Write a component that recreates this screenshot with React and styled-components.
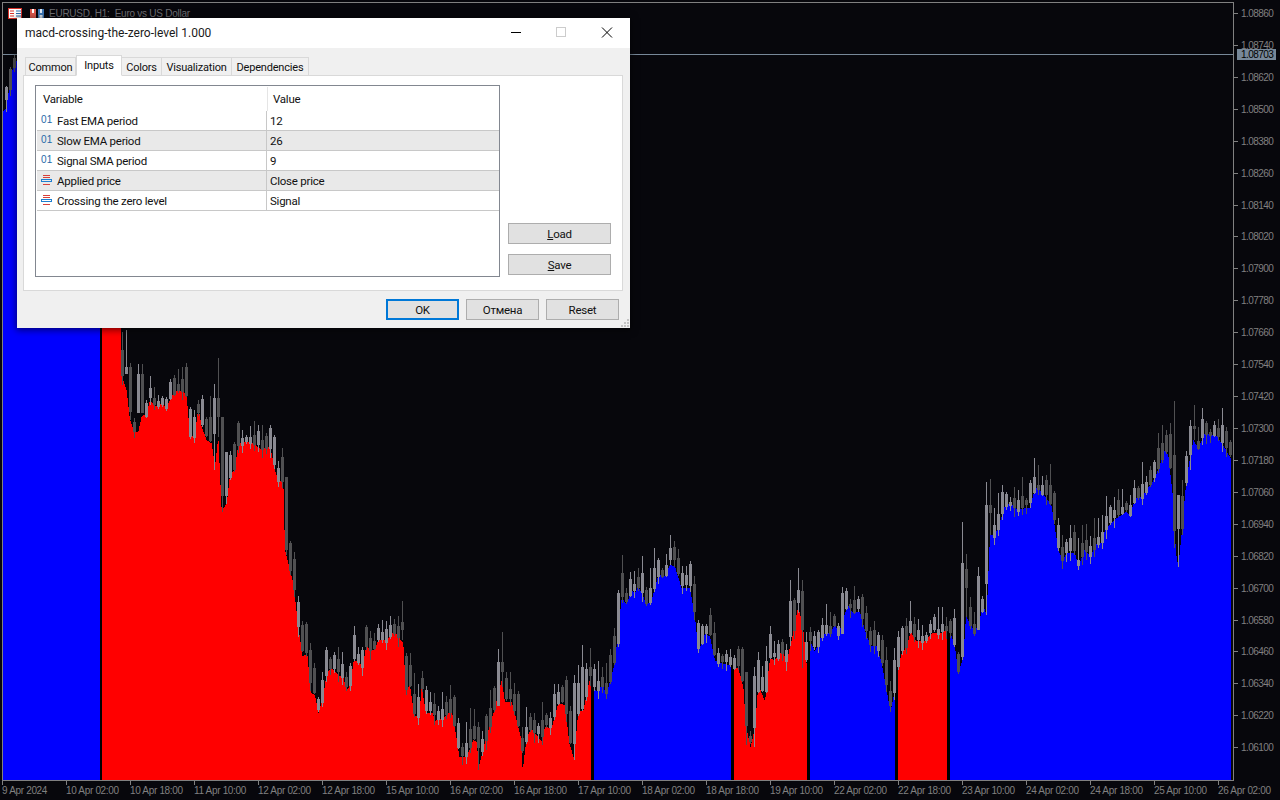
import React from 'react';
import styled, { createGlobalStyle } from 'styled-components';

const Global = createGlobalStyle`
  html, body { margin: 0; padding: 0; background: #07070c; }
  body { font-family: Roboto, "Liberation Sans", sans-serif; }
`;

/* ---------- chart data ---------- */
const conv = (ox, oy, list) => list.map(([x, y]) => [ox + x / 3, oy + y / 3]);

const SEGMENTS = [
  { color: '#0000ff', from: 3, to: 99.5, pts: [[3, 112], [6, 108], [9, 90], [13, 67], [17, 60], [100, 100]] },
  {
    color: '#ff0000', from: 102, to: 591,
    pts: [
      [102, 100], [120, 200],
      ...conv(0, 320, [[364,165],[380,210],[390,300],[403,335],[415,335],[425,290],[440,280],[450,240],[465,260],[480,250],[500,262],[510,240],[525,212],[545,212],[560,225],[570,350],[585,345],[595,262],[605,320],[620,360],[635,370],[645,440],[655,350],[665,570],[680,552],[690,465],[705,447],[715,370],[750,365],[785,388],[810,378],[825,450],[835,483],[850,485]]),
      ...conv(280, 540, [[15,30],[40,130],[55,260],[68,350],[82,340],[92,458],[105,465],[115,520],[130,470],[140,400],[155,383],[175,405],[190,412],[200,450],[212,435],[220,365],[235,360],[248,385],[258,320],[282,332],[295,300],[310,298],[320,305],[335,278],[350,283],[370,310],[378,455],[390,435],[403,530],[418,525],[425,440],[438,520],[458,520],[465,543],[490,533],[515,512],[525,565],[538,650],[560,650],[580,600],[590,605],[597,680],[610,625],[640,520],[665,420],[675,485],[695,485],[725,600],[728,695],[740,590],[755,567],[770,585],[785,605],[795,560],[815,565],[835,490],[855,495],[868,610],[882,655],[895,515],[910,512],[932,405]]),
    ],
  },
  {
    color: '#0000ff', from: 594, to: 731,
    pts: conv(590, 530, [[12,480],[25,483],[38,460],[48,495],[60,455],[75,395],[95,205],[110,222],[125,182],[135,190],[145,170],[170,222],[185,210],[205,135],[225,137],[240,105],[255,110],[275,175],[300,175],[315,260],[325,365],[345,310],[360,320],[375,392],[395,400],[423,407]]),
  },
  {
    color: '#ff0000', from: 734, to: 807,
    pts: conv(590, 530, [[432,415],[445,415],[460,470],[468,590],[482,652],[495,590],[505,465],[525,515],[540,385],[555,390],[578,362],[590,395],[605,330],[625,228],[640,300],[651,415]]),
  },
  {
    color: '#0000ff', from: 810, to: 895,
    pts: conv(590, 530, [[660,330],[675,365],[695,315],[725,305],[735,278],[745,315],[765,250],[775,228],[785,245],[810,245],[830,320],[845,350],[860,347],[875,400],[895,510],[902,545],[915,478]]),
  },
  {
    color: '#ff0000', from: 898, to: 947,
    pts: conv(890, 460, [[24,625],[35,580],[50,560],[62,515],[78,543],[105,542],[130,518],[150,520],[172,510]]),
  },
  {
    color: '#0000ff', from: 950, to: 1231.5,
    pts: [
      ...conv(890, 460, [[180,515],[195,560],[205,640],[220,590],[228,470],[240,490],[255,520],[272,465],[280,435],[290,465],[300,225],[315,225],[330,185],[345,135],[360,130],[385,150],[405,145],[420,145],[435,85],[445,85],[470,115],[485,140],[495,205],[505,270],[518,300],[530,280],[555,280],[565,320],[585,265],[600,290]]),
      ...conv(1040, 390, [[150,500],[170,460],[185,458],[195,420],[230,385],[260,365],[270,380],[285,325],[305,320],[345,265],[375,180],[385,195],[400,330],[408,490],[415,530],[425,430],[440,260],[460,150],[475,175],[495,130],[530,137],[555,175],[572,205]]),
    ],
  },
];

const ALL_POINTS = SEGMENTS.flatMap((s) => s.pts);
const profile = (x) => {
  for (let i = 1; i < ALL_POINTS.length; i += 1) {
    const [x0, y0] = ALL_POINTS[i - 1];
    const [x1, y1] = ALL_POINTS[i];
    if (x >= x0 && x <= x1) return x1 === x0 ? y0 : y0 + ((y1 - y0) * (x - x0)) / (x1 - x0);
  }
  return ALL_POINTS[ALL_POINTS.length - 1][1];
};

const rng = (seed) => () => {
  seed = (seed + 0x6d2b79f5) | 0;
  let t = Math.imul(seed ^ (seed >>> 15), 1 | seed);
  t = (t + Math.imul(t ^ (t >>> 7), 61 | t)) ^ t;
  return ((t ^ (t >>> 14)) >>> 0) / 4294967296;
};

/* x: [high, bodyTop, bodyBottom, low, light] */
const TRACED = {
  126: [330, 367, 374, 374, 1], 130: [363, 367, 412, 420, 0], 138: [364, 374, 413, 413, 1], 142: [364, 374, 413, 413, 0],
  214: [384, 398, 434, 470, 1], 218: [358, 398, 417, 437, 0], 222: [417, 417, 496, 512, 0], 226: [452, 452, 496, 504, 1],
  286: [477, 477, 550, 555, 0], 402: [601, 622, 630, 640, 0], 478: [722, 727, 748, 770, 0], 498: [649, 662, 706, 706, 1],
  502: [632, 662, 672, 687, 0], 574: [675, 683, 744, 760, 1], 582: [645, 667, 709, 711, 1], 618: [590, 593, 644, 647, 1],
  670: [535, 548, 560, 565, 1], 674: [541, 547, 560, 567, 0], 746: [672, 672, 726, 745, 0], 754: [667, 676, 728, 747, 1],
  790: [580, 601, 637, 646, 1], 798: [568, 590, 603, 613, 1], 802: [580, 591, 630, 668, 0], 842: [587, 593, 634, 634, 1],
  962: [522, 563, 657, 660, 1], 966: [554, 569, 588, 617, 0], 978: [567, 576, 630, 630, 1], 986: [482, 505, 584, 615, 1],
  990: [479, 505, 513, 535, 0], 1030: [480, 483, 503, 508, 1], 1174: [401, 455, 531, 548, 0], 1178: [495, 495, 529, 567, 1],
  1190: [420, 426, 455, 470, 1], 1194: [405, 426, 429, 440, 0],
};
const LEFT_CANDLES = [
  [6, 86, 87, 100, 112, 1],
  [10, 67, 69, 90, 96, 0],
  [14, 54, 58, 68, 72, 0],
];

const candlePath = (x, hi, bt, bb, lo) => `M${x} ${hi}h1V${lo}h-1zM${x - 1} ${bt}h3V${Math.max(bb, bt + 1)}h-3z`;

const buildCandles = () => {
  const r = rng(20240409);
  const light = [];
  const dark = [];
  LEFT_CANDLES.forEach(([x, hi, bt, bb, lo, isLight]) => {
    (isLight ? light : dark).push(candlePath(x, hi, bt, bb, lo));
  });
  for (let x = 122; x <= 1230; x += 4) {
    const p = profile(x);
    const prev = profile(x - 4);
    const next = profile(x + 4);
    const slope = Math.abs(next - prev);
    const bull = r() < (next < p ? 0.7 : 0.35);
    const h = 3 + Math.min(slope, 40) * 0.55 + r() * 9;
    const bottom = Math.round(p + r() * 6 - 3);
    const top = Math.round(bottom - h);
    const a = r();
    const b = r();
    const generated = [Math.round(top - 2 - a * a * 20), top, bottom, Math.round(bottom + 1 + b * b * 9), bull ? 1 : 0];
    const [hi, bt, bb, lo, isLight] = TRACED[x] || generated;
    (isLight ? light : dark).push(candlePath(x, hi, bt, bb, lo));
  }
  return { light: light.join(''), dark: dark.join('') };
};
const CANDLES = buildCandles();

const PRICES = ['1.08860','1.08740','1.08620','1.08500','1.08380','1.08260','1.08140','1.08020','1.07900','1.07780','1.07660','1.07540','1.07420','1.07300','1.07180','1.07060','1.06940','1.06820','1.06700','1.06580','1.06460','1.06340','1.06220','1.06100'];
const TIMES = ['9 Apr 2024','10 Apr 02:00','10 Apr 18:00','11 Apr 10:00','12 Apr 02:00','12 Apr 18:00','15 Apr 10:00','16 Apr 02:00','16 Apr 18:00','17 Apr 10:00','18 Apr 02:00','18 Apr 18:00','19 Apr 10:00','22 Apr 02:00','22 Apr 18:00','23 Apr 10:00','24 Apr 02:00','24 Apr 18:00','25 Apr 10:00','26 Apr 02:00'];

const ROWS = [
  { icon: 'num', name: 'Fast EMA period', value: '12' },
  { icon: 'num', name: 'Slow EMA period', value: '26' },
  { icon: 'num', name: 'Signal SMA period', value: '9' },
  { icon: 'enum', name: 'Applied price', value: 'Close price' },
  { icon: 'enum', name: 'Crossing the zero level', value: 'Signal' },
];
const TABS = ['Common', 'Inputs', 'Colors', 'Visualization', 'Dependencies'];

/* ---------- terminal ---------- */
const Terminal = styled.div`
  position: relative;
  width: 1280px;
  height: 800px;
  overflow: hidden;
  background: #07070c;
  display: grid;
  grid-template-columns: 1234px 46px;
  grid-template-rows: 781px 19px;
`;
const ChartFrame = styled.div`
  margin: 2px 0 0 2px;
  border: 1px solid #808080;
  overflow: hidden;
  background: #07070c;
  svg { display: block; }
`;
const ChartTitle = styled.div`
  position: absolute;
  left: 8px;
  top: 7px;
  display: flex;
  align-items: center;
  gap: 4px;
  color: #6f6f74;
  font: 10px/13px "Liberation Sans", sans-serif;
  letter-spacing: -0.25px;
  white-space: pre;
`;
const PriceAxis = styled.div`
  padding-top: 8px;
  display: flex;
  flex-direction: column;
`;
const PriceRow = styled.div`
  height: 31.93px;
  display: flex;
  align-items: flex-start;
  color: #808080;
  font: 10px/12px "Liberation Sans", sans-serif;
  letter-spacing: -0.55px;
  &::before {
    content: '';
    width: 4px;
    height: 1px;
    margin: 5px 3px 0 0;
    background: #808080;
  }
`;
const PriceTag = styled.div`
  position: absolute;
  left: 1237px;
  top: 49px;
  width: 39px;
  height: 11px;
  padding-left: 4px;
  box-sizing: border-box;
  background: #778899;
  color: #000;
  font: 10px/11px "Liberation Sans", sans-serif;
  letter-spacing: -0.55px;
`;
const TimeAxis = styled.div`
  grid-column: 1 / 3;
  display: grid;
  grid-template-columns: repeat(20, 64px);
  padding-left: 2px;
`;
const TimeCell = styled.div`
  position: relative;
  color: #808080;
  font: 10px/12px "Liberation Sans", sans-serif;
  letter-spacing: -0.33px;
  white-space: nowrap;
  padding-top: 4px;
  &::before {
    content: '';
    position: absolute;
    left: 0;
    top: 0;
    width: 1px;
    height: 4px;
    background: #808080;
  }
`;

/* ---------- dialog ---------- */
const Dialog = styled.div`
  position: absolute;
  left: 17px;
  top: 18px;
  width: 613px;
  height: 310px;
  display: flex;
  flex-direction: column;
  background: #f0f0f0;
  box-shadow: 0 1px 7px 1px rgba(0, 0, 0, 0.55);
  color: #111;
  font: 11.5px/14px Roboto, sans-serif;
  letter-spacing: -0.24px;
`;
const TitleBar = styled.div`
  height: 30px;
  flex: none;
  background: #fff;
  display: flex;
  align-items: center;
  padding-left: 8px;
`;
const TitleText = styled.div`
  flex: 1;
  font-size: 12px;
  letter-spacing: 0;
  color: #1a1a1a;
`;
const WinButton = styled.div`
  width: ${(p) => p.$w}px;
  margin-right: ${(p) => p.$mr || 0}px;
  height: 30px;
  padding-bottom: 2px;
  box-sizing: border-box;
  display: flex;
  align-items: center;
  justify-content: center;
`;
const DialogBody = styled.div`
  flex: 1;
  display: flex;
  flex-direction: column;
  padding: 7px 7px 0 6px;
  min-height: 0;
`;
const TabStrip = styled.div`
  display: flex;
  align-items: flex-end;
  height: 21px;
  padding-left: 2px;
  position: relative;
  z-index: 1;
  margin-bottom: -1px;
`;
const Tab = styled.div`
  width: ${(p) => p.$w}px;
  box-sizing: border-box;
  height: ${(p) => (p.$active ? 21 : 19)}px;
  border: 1px solid #d9d9d9;
  border-left-width: ${(p) => (p.$first || p.$active ? 1 : 0)}px;
  border-bottom-color: ${(p) => (p.$active ? '#fff' : '#d9d9d9')};
  background: ${(p) => (p.$active ? '#fff' : '#f0f0f0')};
  text-align: center;
  font-size: 11px;
  letter-spacing: -0.2px;
  line-height: ${(p) => (p.$active ? 19 : 20)}px;
  color: #111;
`;
const Panel = styled.div`
  height: 216px;
  box-sizing: border-box;
  flex: none;
  border: 1px solid #d9d9d9;
  background: #fff;
  padding: 9px 10px 13px 11px;
  display: flex;
  gap: 8px;
`;
const VarTable = styled.div`
  width: 465px;
  box-sizing: border-box;
  border: 1px solid #828790;
  padding: 1px 0 0 1px;
  background: #fff;
  display: flex;
  flex-direction: column;
`;
const HeadRow = styled.div`
  height: 24px;
  flex: none;
  display: grid;
  grid-template-columns: 230px 1fr;
`;
const HeadCell = styled.div`
  padding: 5px 0 0 6px;
  & + & { border-left: 1px solid #e5e5e5; padding-left: 5px; }
`;
const Row = styled.div`
  height: 20px;
  box-sizing: border-box;
  flex: none;
  display: grid;
  grid-template-columns: 230px 1fr;
  border-bottom: 1px solid #c8c8c8;
  background: ${(p) => (p.$shade ? '#e9e9e9' : '#fff')};
`;
const NameCell = styled.div`
  display: flex;
  align-items: center;
  gap: 5px;
  padding-left: 4px;
  border-right: 1px solid #c8c8c8;
  white-space: nowrap;
`;
const ValueCell = styled.div`
  display: flex;
  align-items: center;
  padding-left: 3px;
`;
const NumIcon = styled.span`
  width: 11px;
  flex: none;
  color: #1f6aa8;
  font: 400 10px/12px "Liberation Sans", sans-serif;
  letter-spacing: 0.3px;
  margin-top: -1px;
`;
const SideColumn = styled.div`
  width: 103px;
  display: flex;
  flex-direction: column;
  justify-content: flex-end;
  gap: 10px;
  padding-bottom: 2px;
`;
const Btn = styled.div`
  width: ${(p) => p.$w || 73}px;
  height: 21px;
  box-sizing: border-box;
  border: ${(p) => (p.$default ? '2px solid #0078d7' : '1px solid #adadad')};
  background: #e1e1e1;
  display: flex;
  align-items: center;
  justify-content: center;
  color: #111;
  u { text-underline-offset: 1px; }
`;
const Footer = styled.div`
  position: relative;
  flex: 1;
  display: flex;
  justify-content: flex-end;
  gap: 7px;
  padding: 8px 4px 0 0;
`;
const Grip = styled.svg`
  position: absolute;
  right: -7px;
  bottom: 0;
`;

const EnumIcon = () => (
  <svg width="11" height="11" viewBox="0 0 11 11" style={{ flex: 'none' }}>
    <path d="M2 0.500h7M2 2.500h7" stroke="#d8403a" />
    <path d="M0 4.500h11M0 6.500h11" stroke="#1f7fd0" />
    <path d="M0 5.500h1M10 5.500h1" stroke="#1f7fd0" />
    <path d="M2 9.500h7" stroke="#d8403a" />
  </svg>
);

const chartPath = (s) => {
  const pts = s.pts.map(([x, y]) => [Math.max(s.from, Math.min(x, s.to)), y]);
  return `M${s.from} 781L${pts.map((p) => p.join(' ')).join('L')}L${s.to} 781Z`;
};

const Chart = () => (
  <svg width="1230" height="777" viewBox="3 3 1230 777" shapeRendering="crispEdges">
    <rect x="0" y="0" width="1280" height="800" fill="#07070c" />
    <rect x="99" y="100" width="3" height="700" fill="#000" />
    <rect x="591" y="690" width="3" height="100" fill="#000" />
    <rect x="731" y="665" width="3" height="130" fill="#000" />
    <rect x="807" y="640" width="3" height="150" fill="#000" />
    <rect x="895" y="690" width="3" height="100" fill="#000" />
    <rect x="947" y="632" width="3" height="160" fill="#000" />
    {SEGMENTS.map((s) => (
      <path key={s.from} d={chartPath(s)} fill={s.color} />
    ))}
    <path d={CANDLES.dark} fill="#505052" />
    <path d={CANDLES.light} fill="#8a8a92" />
    <rect x="0" y="54" width="1240" height="1" fill="#778899" />
  </svg>
);

const TableIcon = () => (
  <svg width="15" height="11" viewBox="0 0 15 11">
    <rect x="0.5" y="0.5" width="13" height="10" fill="#fff" stroke="#d9322a" />
    <path d="M2 3h4M2 5.500h4M2 8h4" stroke="#d9322a" />
    <path d="M7.500 1v9" stroke="#fff" />
    <path d="M8 3h5M8 5.500h5M8 8h5" stroke="#2b6cb0" />
  </svg>
);
const SaveIcon = () => (
  <svg width="16" height="11" viewBox="0 0 16 11" style={{ marginLeft: 2 }}>
    <path d="M1 1h6v10H1z" fill="#e05a4e" />
    <path d="M3 1h2v4H3z" fill="#fff" />
    <path d="M9 1h6v10H9z" fill="#3d78b8" />
    <path d="M11 1h2v4h-2zM10.500 7h3v3h-3z" fill="#dfe8f2" />
  </svg>
);

export default function App() {
  return (
    <Terminal>
      <Global />
      <ChartFrame>
        <Chart />
      </ChartFrame>
      <PriceAxis>
        {PRICES.map((p) => (
          <PriceRow key={p}>{p}</PriceRow>
        ))}
      </PriceAxis>
      <TimeAxis>
        {TIMES.map((t) => (
          <TimeCell key={t}>{t}</TimeCell>
        ))}
      </TimeAxis>
      <ChartTitle>
        <TableIcon />
        <SaveIcon />
        <span>EURUSD, H1:  Euro vs US Dollar</span>
      </ChartTitle>
      <PriceTag>1.08703</PriceTag>

      <Dialog>
        <TitleBar>
          <TitleText>macd-crossing-the-zero-level 1.000</TitleText>
          <WinButton $w={46}>
            <svg width="10" height="10" viewBox="0 0 10 10"><path d="M0 5.500h10" stroke="#000" /></svg>
          </WinButton>
          <WinButton $w={44} $mr={1}>
            <svg width="10" height="10" viewBox="0 0 10 10"><rect x="0.500" y="0.500" width="9" height="9" fill="none" stroke="#ccc" /></svg>
          </WinButton>
          <WinButton $w={46}>
            <svg width="12" height="11" viewBox="0 0 12 11"><path d="M1 0.500l10 10M11 0.500l-10 10" stroke="#000" /></svg>
          </WinButton>
        </TitleBar>
        <DialogBody>
          <TabStrip>
            {TABS.map((t, i) => (
              <Tab key={t} $first={i === 0} $active={t === 'Inputs'} $w={[51, 46, 40, 70, 77][i]}>{t}</Tab>
            ))}
          </TabStrip>
          <Panel>
            <VarTable>
              <HeadRow>
                <HeadCell>Variable</HeadCell>
                <HeadCell>Value</HeadCell>
              </HeadRow>
              {ROWS.map((r, i) => (
                <Row key={r.name} $shade={i % 2 === 1}>
                  <NameCell>
                    {r.icon === 'num' ? <NumIcon>01</NumIcon> : <EnumIcon />}
                    <span>{r.name}</span>
                  </NameCell>
                  <ValueCell>{r.value}</ValueCell>
                </Row>
              ))}
            </VarTable>
            <SideColumn>
              <Btn $w={103}><span><u>L</u>oad</span></Btn>
              <Btn $w={103}><span><u>S</u>ave</span></Btn>
            </SideColumn>
          </Panel>
          <Footer>
            <Btn $default>OK</Btn>
            <Btn>Отмена</Btn>
            <Btn>Reset</Btn>
            <Grip width="9" height="10" viewBox="0 0 9 10">
              <path d="M6 1h2v2H6zM3 4h2v2H3zM6 4h2v2H6zM0 7h2v2H0zM3 7h2v2H3zM6 7h2v2H6z" fill="#c4c4c4" />
            </Grip>
          </Footer>
        </DialogBody>
      </Dialog>
    </Terminal>
  );
}
